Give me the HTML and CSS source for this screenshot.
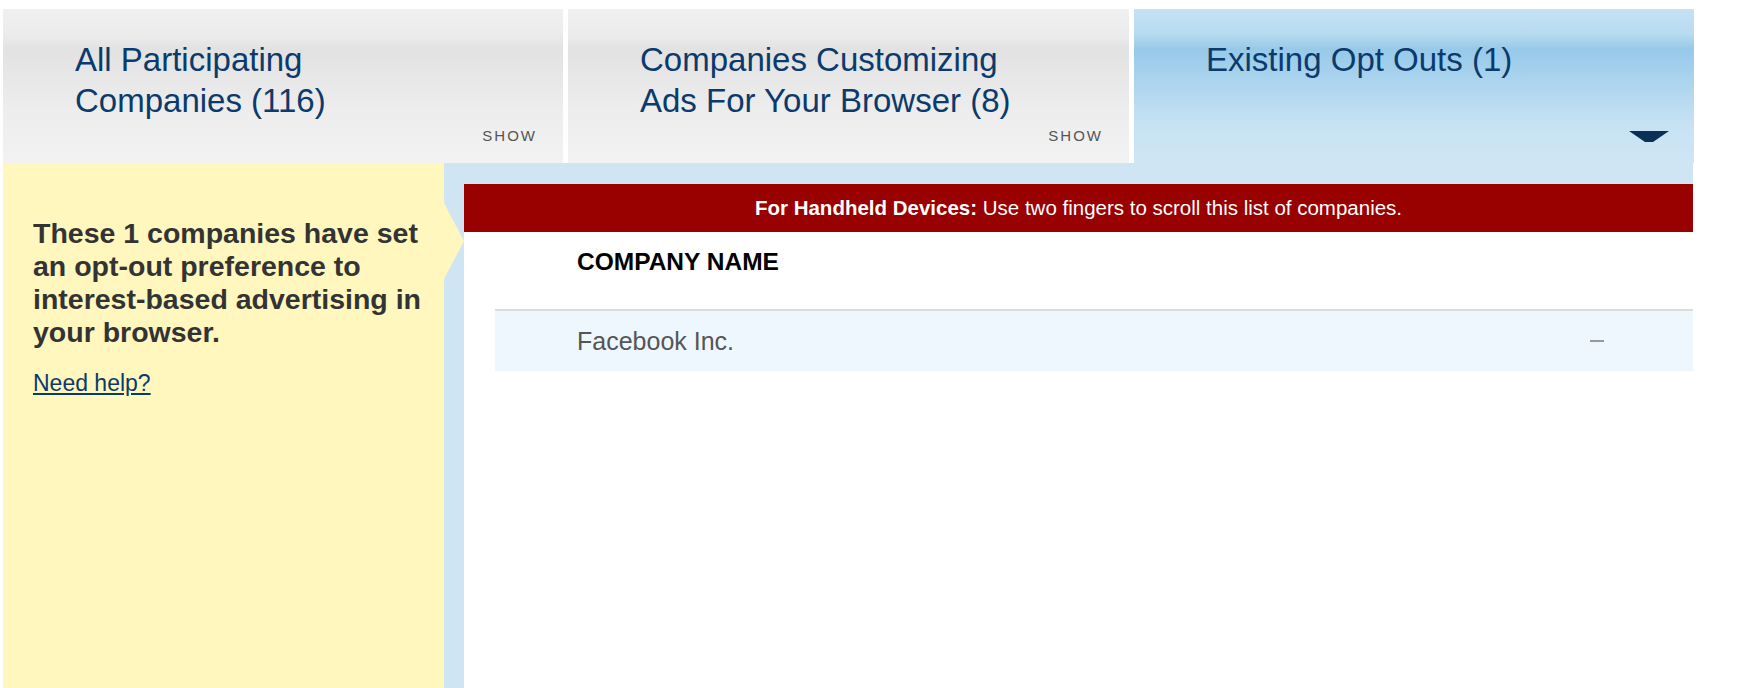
FILE: index.html
```html
<!DOCTYPE html>
<html lang="en">
<head>
    <meta charset="UTF-8">
    <title>Existing Opt Outs</title>
    <link rel="stylesheet" href="styles.css">
</head>
<body>
    <div class="page">
        <div class="tabs">
            <div class="tab">
                <div class="tab-title">All Participating<br>Companies (116)</div>
                <span class="show">SHOW</span>
            </div>
            <div class="tab">
                <div class="tab-title">Companies Customizing<br>Ads For Your Browser (8)</div>
                <span class="show">SHOW</span>
            </div>
            <div class="tab active">
                <div class="tab-title">Existing Opt Outs (1)</div>
                <svg class="caret" width="40" height="12" viewBox="0 0 40 12">
                    <path d="M0 0 H40 L24 11 H16 Z" fill="#0c2f57"/>
                </svg>
            </div>
        </div>

        <div class="main">
            <div class="sidebar">
                <p class="intro">These 1 companies have set an opt-out preference to interest-based advertising in your browser.</p>
                <a href="#" class="help">Need help?</a>
                <span class="pointer"></span>
            </div>
            <div class="content">
                <div class="panel">
                    <div class="notice"><b>For Handheld Devices:</b> Use two fingers to scroll this list of companies.</div>
                    <div class="list">
                        <div class="list-head">COMPANY NAME</div>
                        <div class="list-row">
                            <span class="company">Facebook Inc.</span>
                            <span class="dash"></span>
                        </div>
                    </div>
                </div>
            </div>
        </div>
    </div>
</body>
</html>
```

FILE: styles.css
```css
body {
    margin: 0;
    background-color: #ffffff;
    font-family: "Liberation Sans", Arial, Helvetica, sans-serif;
}
.page {
    width: 1690px;
    padding: 9px 0 0 3px;
}
.tabs {
    display: grid;
    grid-template-columns: 560px 561px 560px;
    column-gap: 5px;
}
.tab {
    height: 154px;
    box-sizing: border-box;
    padding: 30px 26px 20px 72px;
    display: flex;
    flex-direction: column;
    background: linear-gradient(#f0f0f0 0%, #ebebeb 18%, #e2e2e2 26%, #e6e6e6 40%, #eeeeee 70%, #f2f2f2 100%);
}
.tab.active {
    background: linear-gradient(#c4e2f4 0%, #b8dbf1 16%, #97c9e9 26%, #aad3ee 45%, #c6e2f3 75%, #cfe6f4 100%);
}
.tab-title {
    font-size: 33px;
    line-height: 41px;
    color: #0b3a6c;
}
.show {
    margin-top: auto;
    align-self: flex-end;
    font-size: 15px;
    line-height: 16px;
    letter-spacing: 2px;
    color: #555555;
    margin-bottom: -1px;
}
.caret {
    margin-top: auto;
    align-self: flex-end;
    margin-right: -1px;
}
.main {
    display: flex;
    height: 525px;
}
.sidebar {
    position: relative;
    width: 441px;
    flex-shrink: 0;
    box-sizing: border-box;
    padding: 54px 12px 0 30px;
    background-color: #fff7bd;
}
.intro {
    margin: 0;
    font-size: 28.5px;
    line-height: 33px;
    font-weight: bold;
    color: #333333;
}
.help {
    display: inline-block;
    margin-top: 21px;
    font-size: 23px;
    color: #0b3a6c;
}
.pointer {
    position: absolute;
    right: -20px;
    top: 40px;
    width: 0;
    height: 0;
    border-top: 38px solid transparent;
    border-bottom: 38px solid transparent;
    border-left: 20px solid #fff7bd;
}
.content {
    flex: 1;
    padding: 21px 0 0 20px;
    background-color: #cfe5f3;
}
.panel {
    height: 100%;
    background-color: #ffffff;
}
.notice {
    height: 48px;
    line-height: 48px;
    text-align: center;
    font-size: 20.5px;
    color: #ffffff;
    background-color: #990000;
}
.list {
    margin-left: 31px;
}
.list-head {
    height: 79px;
    box-sizing: border-box;
    padding: 16px 0 0 82px;
    font-size: 24.5px;
    font-weight: bold;
    color: #000000;
    border-bottom: 2px solid #dcdcdc;
}
.list-row {
    height: 60px;
    display: flex;
    align-items: center;
    justify-content: space-between;
    padding: 0 89px 0 82px;
    background-color: #eef7fd;
}
.company {
    font-size: 25px;
    color: #555555;
}
.dash {
    width: 14px;
    height: 2px;
    background-color: #999999;
}
```
